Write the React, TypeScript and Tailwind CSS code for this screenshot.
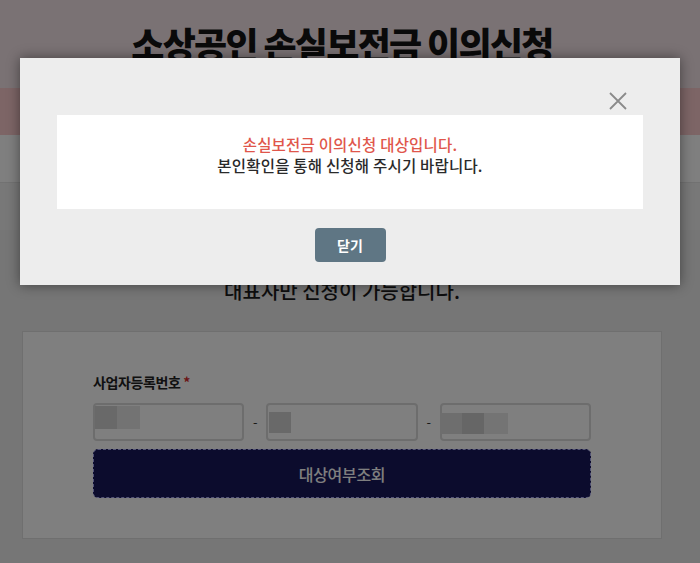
import React from "react";

const FONT = "font-['Noto_Sans_CJK_KR','Noto_Sans',sans-serif]";

export default function App() {
  return (
    <div className={`relative w-[700px] h-[563px] overflow-hidden bg-[#ececec] ${FONT}`}>
      {/* page underneath */}
      <header className="h-[88px] bg-[#f4e4e8] pt-[25px]">
        <h1 className="w-[684px] text-center text-[36px] leading-[36px] font-extrabold tracking-[-1.7px] text-[#151515]">
          소상공인 손실보전금 이의신청
        </h1>
      </header>
      <div className="h-[47px] bg-[#facacc]" />
      <div className="h-[48px] bg-white border-b border-[#e4e4e4]" />
      <div className="h-[47px] bg-[#f0f0f0]" />
      <main className="w-[684px]">
        <p className="mt-[48px] h-[25px] text-center text-[20px] leading-[25px] tracking-[0px] font-medium text-[#1c1c1c]">
          대표자만 신청이 가능합니다.
        </p>
        <section className="ml-[22px] w-[640px] mt-[28px] h-[208px] bg-white border border-[#dedede] px-[70px] pt-[40px]">
          <label className="block text-[14px] leading-[20px] font-bold tracking-[-0.4px] text-[#222]">
            사업자등록번호 <span className="text-[#d62b2b]">*</span>
          </label>
          <div className="mt-[11px] flex items-center">
            <div className="flex-1 h-[38px] rounded-[4px] border-2 border-[#dadada] bg-white flex items-start">
              <span className="mt-[1px] w-[22px] h-[23px] bg-[#d2d2d2]" />
              <span className="mt-[1px] w-[23px] h-[23px] bg-[#e6e6e6]" />
            </div>
            <span className="w-[22px] text-center text-[13px] text-[#333]">-</span>
            <div className="flex-1 h-[38px] rounded-[4px] border-2 border-[#dadada] bg-white flex items-start">
              <span className="ml-[1px] mt-[7px] w-[22px] h-[21px] bg-[#d2d2d2]" />
            </div>
            <span className="w-[22px] text-center text-[13px] text-[#333]">-</span>
            <div className="flex-1 h-[38px] rounded-[4px] border-2 border-[#dadada] bg-white flex items-start">
              <span className="-ml-[2px] mt-[8px] w-[22px] h-[21px] bg-[#dcdcdc]" />
              <span className="mt-[8px] w-[22px] h-[21px] bg-[#cccccc]" />
              <span className="mt-[8px] w-[24px] h-[21px] bg-[#e8e8e8]" />
            </div>
          </div>
          <button className="mt-[8px] w-full h-[49px] rounded-[5px] bg-[#18185a] border border-dashed border-[#a8a8ee] text-[16px] font-medium tracking-[-0.3px] text-white">
            대상여부조회
          </button>
        </section>
      </main>

      {/* dim overlay */}
      <div className="absolute inset-0 bg-black/50" />

      {/* modal */}
      <div className="absolute left-[20px] top-[58px] w-[660px] h-[227px] bg-[#ededed] shadow-[0_0_12px_rgba(0,0,0,0.45)] px-[37px] pt-[57px]">
        <button className="absolute left-[587px] top-[32px] w-[22px] h-[22px] flex items-center justify-center" aria-label="close">
          <svg width="20" height="20" viewBox="0 0 20 20" fill="none">
            <path d="M2 2 L18 18 M18 2 L2 18" stroke="#8a8a8a" strokeWidth="1.8" />
          </svg>
        </button>
        <div className="h-[94px] bg-white pt-[19px] text-center text-[15.5px] leading-[20.5px] tracking-[0.2px] font-medium">
          <p className="text-[#e0564b]">손실보전금 이의신청 대상입니다.</p>
          <p className="text-[#2a2a2a]">본인확인을 통해 신청해 주시기 바랍니다.</p>
        </div>
        <div className="mt-[19px] flex justify-center">
          <button className="w-[71px] h-[34px] rounded-[4px] bg-[#5f7684] text-white text-[14px] font-bold">
            닫기
          </button>
        </div>
      </div>
    </div>
  );
}
